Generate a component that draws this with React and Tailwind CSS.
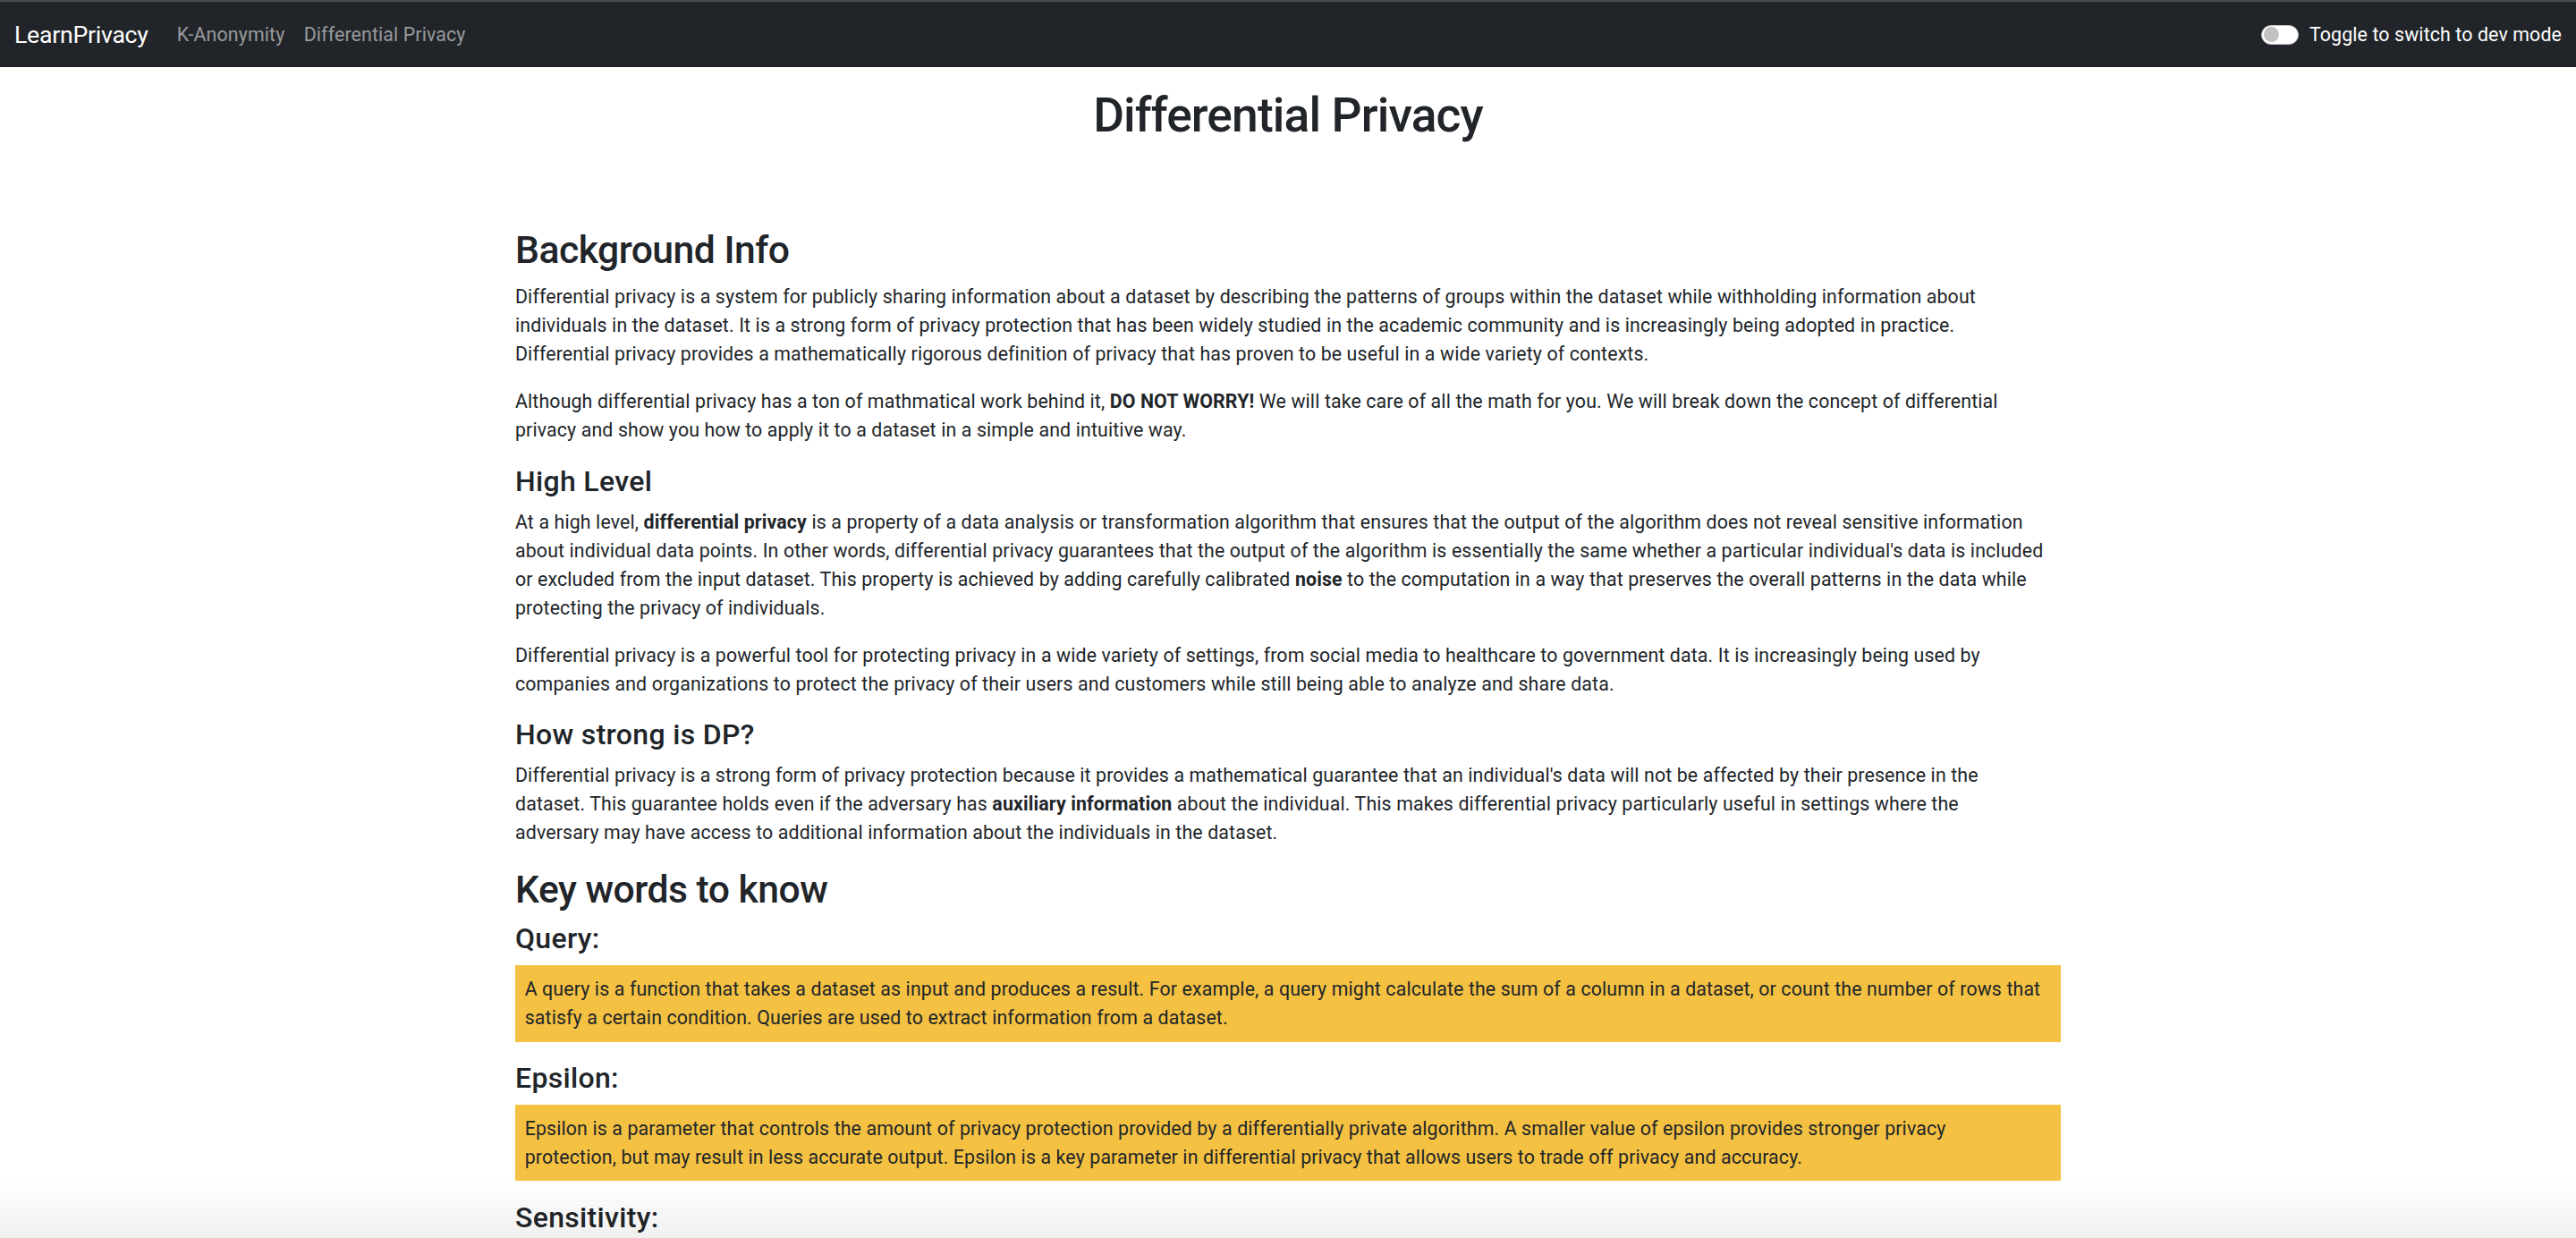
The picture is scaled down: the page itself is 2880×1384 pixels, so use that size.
import React from "react";

const H4 = ({ children }) => (
  <h4 className="text-[32px] leading-[1.2] font-medium tracking-[0.01em] mb-[10.67px]">{children}</h4>
);
const H2 = ({ children }) => (
  <h2 className="text-[42.67px] leading-[1.2] font-medium tracking-[-0.012em] mb-[10.67px]">{children}</h2>
);
const P = ({ children }) => <p className="mb-[21.33px]">{children}</p>;
const Box = ({ children }) => (
  <div className="bg-[#f4c142] p-[10.67px] mb-[21.33px]">{children}</div>
);

export default function App() {
  return (
    <div
      className="min-h-screen bg-white text-[#212529] text-[21.33px] leading-[32px] tracking-[0.006em]"
      style={{ fontFamily: "Roboto, 'Noto Sans', 'Liberation Sans', sans-serif" }}
    >
      <nav className="h-[75px] bg-[#212529] border-t-2 border-[#474c51] flex items-center justify-between px-[16px]">
        <div className="flex items-center">
          <span className="text-white text-[26.67px] leading-[1.5] mr-[21.33px] tracking-[-0.01em]">LearnPrivacy</span>
          <a className="px-[10.67px] text-[rgba(255,255,255,0.55)]">K-Anonymity</a>
          <a className="px-[10.67px] text-[rgba(255,255,255,0.55)]">Differential Privacy</a>
        </div>
        <div className="flex items-center">
          <div className="w-[42px] h-[22px] rounded-full bg-white border border-[#bfbfbf] flex items-center px-[2px]">
            <div className="w-[17px] h-[17px] rounded-full bg-[#c2c2c2]" />
          </div>
          <span className="text-white ml-[12px]">Toggle to switch to dev mode</span>
        </div>
      </nav>

      <main className="mx-auto w-[1760px] px-[16px]">
        <h1 className="text-center text-[53.33px] leading-[1.2] font-medium tracking-[-0.016em] mt-[23px] mb-[92px]">
          Differential Privacy
        </h1>

        <H2>Background Info</H2>
        <P>
          Differential privacy is a system for publicly sharing information about a dataset by describing the
          patterns of groups within the dataset while withholding information about<br />individuals in the dataset. It is
          a strong form of privacy protection that has been widely studied in the academic community and is
          increasingly being adopted in practice.<br />Differential privacy provides a mathematically rigorous definition
          of privacy that has proven to be useful in a wide variety of contexts.
        </P>
        <P>
          Although differential privacy has a ton of mathmatical work behind it, <b className="font-bold">DO NOT WORRY!</b> We
          will take care of all the math for you. We will break down the concept of differential<br />privacy and show you
          how to apply it to a dataset in a simple and intuitive way.
        </P>

        <H4>High Level</H4>
        <P>
          At a high level, <b className="font-bold">differential privacy</b> is a property of a data analysis or
          transformation algorithm that ensures that the output of the algorithm does not reveal sensitive information<br />about
          individual data points. In other words, differential privacy guarantees that the output of the
          algorithm is essentially the same whether a particular individual's data is included<br />or excluded from the
          input dataset. This property is achieved by adding carefully calibrated <b className="font-bold">noise</b> to
          the computation in a way that preserves the overall patterns in the data while<br />protecting the privacy of
          individuals.
        </P>
        <P>
          Differential privacy is a powerful tool for protecting privacy in a wide variety of settings, from social
          media to healthcare to government data. It is increasingly being used by<br />companies and organizations to
          protect the privacy of their users and customers while still being able to analyze and share data.
        </P>

        <H4>How strong is DP?</H4>
        <P>
          Differential privacy is a strong form of privacy protection because it provides a mathematical guarantee
          that an individual's data will not be affected by their presence in the<br />dataset. This guarantee holds even
          if the adversary has <b className="font-bold">auxiliary information</b> about the individual. This makes
          differential privacy particularly useful in settings where the<br />adversary may have access to additional
          information about the individuals in the dataset.
        </P>

        <H2>Key words to know</H2>
        <H4>Query:</H4>
        <Box>
          A query is a function that takes a dataset as input and produces a result. For example, a query might
          calculate the sum of a column in a dataset, or count the number of rows that<br />satisfy a certain condition.
          Queries are used to extract information from a dataset.
        </Box>
        <H4>Epsilon:</H4>
        <Box>
          Epsilon is a parameter that controls the amount of privacy protection provided by a differentially private
          algorithm. A smaller value of epsilon provides stronger privacy<br />protection, but may result in less accurate
          output. Epsilon is a key parameter in differential privacy that allows users to trade off privacy and
          accuracy.
        </Box>
        <H4>Sensitivity:</H4>
        <Box>
          Sensitivity is a measure of how much the output of a query can change when a single individual's data is
          added to or removed from the dataset.
        </Box>
      </main>

      <div className="pointer-events-none fixed left-0 right-0 bottom-0 h-[66px] bg-gradient-to-b from-[rgba(0,0,0,0)] to-[rgba(0,0,0,0.06)]" />
    </div>
  );
}
